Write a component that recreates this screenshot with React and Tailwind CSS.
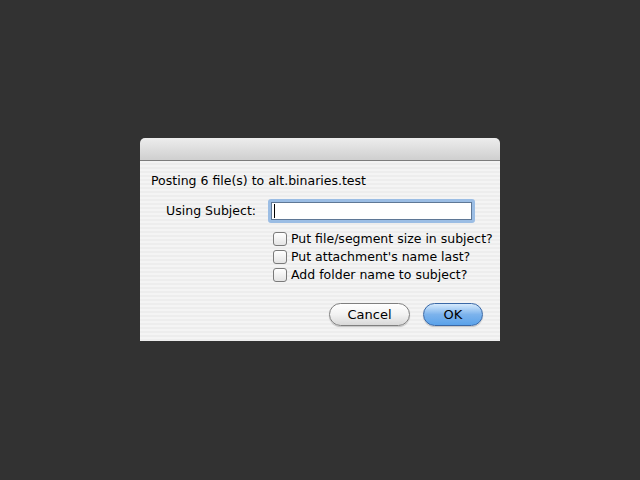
export default function App() {
  return (
    <div className="min-h-[480px] w-[640px] bg-[#323232] pt-[138px] pl-[140px] font-['Lucida_Grande','DejaVu_Sans',sans-serif] text-[12.5px] text-black">
      <div className="w-[360px] h-[203px] flex flex-col">
        {/* Title bar */}
        <div className="h-[23px] rounded-t-[5px] bg-gradient-to-b from-[#ededed] to-[#cfcfcf] border-b border-[#7d7d7d]" />

        {/* Body */}
        <div className="flex-1 flex flex-col bg-[repeating-linear-gradient(0deg,#ededed_0px,#ededed_2px,#f4f4f4_2px,#f4f4f4_4px)]">
          <p className="pl-[11px] pt-[12px] leading-[16px]">Posting 6 file(s) to alt.binaries.test</p>

          <div className="flex items-center mt-[10px]">
            <span className="w-[116px] text-right">Using Subject:</span>
            <div className="ml-[12px] w-[207px] h-[24px] rounded-[3px] border-[3px] border-[#9bbde4] p-0">
              <div className="h-full border border-[#5f7896] bg-white flex items-center pl-[2px]">
                <div className="w-px h-[14px] bg-black" />
              </div>
            </div>
          </div>

          <div className="flex flex-col pl-[133px] mt-[9px] gap-[4px]">
            <Check label="Put file/segment size in subject?" />
            <Check label="Put attachment's name last?" />
            <Check label="Add folder name to subject?" />
          </div>

          <div className="flex justify-end gap-[13px] pr-[17px] mt-[21px]">
            <button className="w-[81px] h-[23px] rounded-full border border-[#7f7f7f] bg-gradient-to-b from-white via-[#f2f2f2] to-[#d8d8d8] text-[13px] leading-none shadow-[0_1px_1px_rgba(0,0,0,0.2)]">
              Cancel
            </button>
            <button className="w-[60px] h-[23px] rounded-full border border-[#3a68a6] bg-gradient-to-b from-[#d6eafc] via-[#7cb3ec] to-[#5aa2ea] text-[13px] leading-none shadow-[0_1px_1px_rgba(0,0,0,0.2)]">
              OK
            </button>
          </div>
        </div>
      </div>
    </div>
  )
}

function Check({ label }) {
  return (
    <label className="flex items-center gap-[4px] h-[14px]">
      <span className="w-[14px] h-[14px] rounded-[3px] border border-[#7a7a7a] bg-gradient-to-b from-white to-[#e4e4e4]" />
      <span>{label}</span>
    </label>
  )
}
